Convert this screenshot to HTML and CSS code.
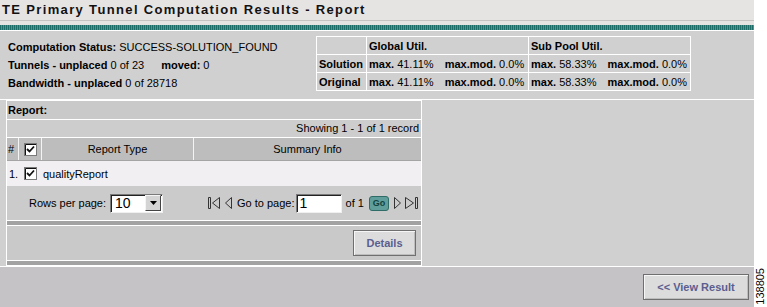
FILE: index.html
```html
<!DOCTYPE html>
<html lang="en">
<head>
    <meta charset="UTF-8">
    <meta name="viewport" content="width=device-width, initial-scale=1.0">
    <title>TE Primary Tunnel Computation Results - Report</title>
    <link rel="stylesheet" href="styles.css">
</head>
<body>
    <div class="page">
        <div class="header">
            <div class="title">TE Primary Tunnel Computation Results - Report</div>
            <div class="stripe"></div>
        </div>

        <div class="summary">
            <div class="status">
                <div><b>Computation Status:</b> SUCCESS-SOLUTION_FOUND</div>
                <div><b>Tunnels - unplaced</b> 0 of 23 <b class="moved">moved:</b> 0</div>
                <div><b>Bandwidth - unplaced</b> 0 of 28718</div>
            </div>
            <table class="util">
                <tr>
                    <th class="label"></th>
                    <th>Global Util.</th>
                    <th>Sub Pool Util.</th>
                </tr>
                <tr>
                    <th class="label">Solution</th>
                    <td><b>max.</b> 41.11% <span class="gap"><b>max.mod.</b> 0.0%</span></td>
                    <td><b>max.</b> 58.33% <span class="gap"><b>max.mod.</b> 0.0%</span></td>
                </tr>
                <tr>
                    <th class="label">Original</th>
                    <td><b>max.</b> 41.11% <span class="gap"><b>max.mod.</b> 0.0%</span></td>
                    <td><b>max.</b> 58.33% <span class="gap"><b>max.mod.</b> 0.0%</span></td>
                </tr>
            </table>
        </div>

        <div class="main">
            <div class="report">
                <div class="report-head">Report:</div>
                <div class="showing">Showing 1 - 1 of 1 record</div>

                <div class="grid-row col-head">
                    <div class="c-num">#</div>
                    <div class="c-check">
                        <svg class="checkbox" width="13" height="13" viewBox="0 0 13 13">
                            <rect x="0.5" y="0.5" width="12" height="12" fill="#fff" stroke="#7a7a7a"/>
                            <path d="M1.5 12V1.5H12" fill="none" stroke="#111"/>
                            <path d="M3 6l2.5 2.5L10 3.5" fill="none" stroke="#111" stroke-width="1.8"/>
                        </svg>
                    </div>
                    <div class="c-type">Report Type</div>
                    <div class="c-info">Summary Info</div>
                </div>

                <div class="grid-row data-row">
                    <div class="c-num">1.</div>
                    <div class="c-check">
                        <svg class="checkbox" width="13" height="13" viewBox="0 0 13 13">
                            <rect x="0.5" y="0.5" width="12" height="12" fill="#fff" stroke="#7a7a7a"/>
                            <path d="M1.5 12V1.5H12" fill="none" stroke="#111"/>
                            <path d="M3 6l2.5 2.5L10 3.5" fill="none" stroke="#111" stroke-width="1.8"/>
                        </svg>
                    </div>
                    <div class="c-type">qualityReport</div>
                    <div class="c-info"></div>
                </div>

                <div class="pager">
                    <span class="rows-label">Rows per page:</span>
                    <div class="select">
                        <span class="select-value">10</span>
                        <span class="select-arrow">
                            <svg width="7" height="4" viewBox="0 0 7 4"><path d="M0 0h7L3.5 4z" fill="#000"/></svg>
                        </span>
                    </div>
                    <div class="nav">
                        <svg class="nav-icon" width="14" height="14" viewBox="0 0 14 14">
                            <path d="M1.5 1.5h2v11h-2z" fill="none" stroke="#333"/>
                            <path d="M12.5 1.5v11L5.5 7z" fill="none" stroke="#333"/>
                        </svg>
                        <svg class="nav-icon prev" width="9" height="14" viewBox="0 0 9 14">
                            <path d="M7.5 1.5v11L1.5 7z" fill="none" stroke="#333"/>
                        </svg>
                        <span class="goto">Go to page:</span>
                        <span class="page-input">1</span>
                        <span class="of">of 1</span>
                        <span class="go">Go</span>
                        <svg class="nav-icon next" width="9" height="14" viewBox="0 0 9 14">
                            <path d="M1.5 1.5v11L7.5 7z" fill="none" stroke="#333"/>
                        </svg>
                        <svg class="nav-icon last" width="16" height="14" viewBox="0 0 16 14">
                            <path d="M1.5 1.5v11L9.5 7z" fill="none" stroke="#333"/>
                            <path d="M11.5 1.5h2v11h-2z" fill="none" stroke="#333"/>
                        </svg>
                    </div>
                </div>

                <div class="sep"></div>
                <div class="actions">
                    <button class="btn">Details</button>
                </div>
                <div class="sep"></div>
            </div>
        </div>

        <div class="footer">
            <button class="btn btn-view">&lt;&lt; View Result</button>
        </div>
    </div>
    <div class="fig-id">138805</div>
</body>
</html>
```

FILE: styles.css
```css
body {
    margin: 0;
    font-family: "Liberation Sans", Arial, sans-serif;
    font-size: 11px;
    color: #000;
    background: #fff;
    display: flex;
    height: 307px;
}

.page {
    width: 754px;
    background: #d0d0d0;
}

.header {
    background: #e6e3e3;
}

.title {
    height: 20px;
    line-height: 20px;
    padding-left: 2px;
    font-size: 13px;
    font-weight: bold;
    letter-spacing: 1.35px;
    color: #111;
    border-bottom: 1px solid #c4c2c2;
}

.stripe {
    margin-top: 4px;
    height: 5px;
    background: repeating-linear-gradient(90deg, #1f6d68 0, #1f6d68 1px, #4a9690 1px, #4a9690 2px);
    border-bottom: 1px solid #fff;
}

.summary {
    display: flex;
    align-items: flex-start;
    height: 63px;
    padding: 5px 0 0 8px;
    border-bottom: 1px solid #fff;
}

.status {
    width: 308px;
    padding-top: 2px;
    line-height: 18px;
}

.moved {
    margin-left: 14px;
}

.util {
    border-collapse: collapse;
    border: 1px solid #fff;
}

.util th,
.util td {
    border: 1px solid #fff;
    height: 17px;
    padding: 0 3px 0 2px;
    text-align: left;
    white-space: nowrap;
}

.util th.label {
    width: 44px;
}

.util td,
.util th {
    width: 156px;
}

.gap {
    margin-left: 8px;
}

.main {
    height: 166px;
    border-bottom: 1px solid #fff;
}

.report {
    margin-left: 6px;
    width: 414px;
    border: 1px solid #fff;
    border-bottom: none;
}

.report-head {
    height: 18px;
    line-height: 18px;
    padding-left: 1px;
    font-weight: bold;
    background: #c9c9c9;
    border-bottom: 1px solid #fff;
}

.showing {
    height: 17px;
    line-height: 17px;
    padding-right: 2px;
    text-align: right;
    background: #cdcdcd;
    border-bottom: 1px solid #fff;
}

.grid-row {
    display: grid;
    grid-template-columns: 12px 23px 152px 1fr;
}

.col-head {
    height: 22px;
    background: #bdbdbd;
    border-bottom: 1px solid #a4a4a4;
}

.col-head > div {
    display: flex;
    align-items: center;
    justify-content: center;
    border-right: 1px solid #f4f4f4;
}

.col-head > div:last-child {
    border-right: none;
}

.col-head .c-num {
    justify-content: flex-start;
    padding-left: 1px;
}

.data-row {
    height: 25px;
    background: #f1eff1;
}

.data-row > div {
    display: flex;
    align-items: center;
}

.data-row .c-num {
    padding-left: 2px;
}

.data-row .c-check {
    justify-content: center;
}

.data-row .c-type {
    padding-left: 1px;
}

.checkbox {
    display: block;
}

.pager {
    display: flex;
    align-items: center;
    height: 34px;
    background: #cbcbcb;
    white-space: nowrap;
}

.pager > * {
    flex-shrink: 0;
}

.rows-label {
    margin-left: 22px;
}

.select {
    display: flex;
    align-items: center;
    margin-left: 4px;
    width: 51px;
    height: 17px;
    background: #fff;
    border: 1px solid;
    border-color: #7a7a7a #f0f0f0 #f0f0f0 #7a7a7a;
    box-shadow: inset 1px 1px 0 #222;
}

.select-value {
    flex: 1;
    padding-left: 4px;
    font-size: 14px;
}

.select-arrow {
    display: flex;
    align-items: center;
    justify-content: center;
    width: 14px;
    height: 14px;
    margin-right: 1px;
    background: #d4d4d4;
    border: 1px solid;
    border-color: #f4f4f4 #444 #444 #f4f4f4;
}

.nav {
    display: flex;
    align-items: center;
    margin-left: 44px;
}

.nav > * {
    flex-shrink: 0;
}

.nav-icon {
    display: block;
}

.prev {
    margin-left: 3px;
}

.goto {
    margin-left: 4px;
}

.page-input {
    width: 41px;
    height: 17px;
    line-height: 17px;
    margin-left: 1px;
    padding-left: 3px;
    font-size: 14px;
    background: #fff;
    border: 1px solid;
    border-color: #7a7a7a #f0f0f0 #f0f0f0 #7a7a7a;
    box-shadow: inset 1px 1px 0 #222;
}

.of {
    margin-left: 4px;
}

.go {
    margin: 0 4px 0 5px;
    width: 18px;
    height: 13px;
    line-height: 13px;
    text-align: center;
    font-size: 9px;
    font-weight: bold;
    color: #12423f;
    background: #5f9e9a;
    border: 1px solid #2f6c68;
    border-radius: 3px;
}

.last {
    margin-left: 2px;
}

.sep {
    height: 4px;
    background: #a2a2a2;
    border-top: 1px solid #fff;
    border-bottom: 1px solid #fff;
}

.actions {
    display: flex;
    justify-content: flex-end;
    align-items: center;
    height: 34px;
    padding-right: 5px;
    background: #c9c9c9;
}

.btn {
    font-family: "Liberation Sans", Arial, sans-serif;
    font-size: 11px;
    font-weight: bold;
    color: #5b5e8f;
    background: #dcdcdc;
    border: 1px solid #6f6f6f;
    box-shadow: inset 1px 1px 0 #f6f6f6, inset -1px -1px 0 #bdbdbd;
    height: 26px;
    width: 63px;
    padding: 0;
}

.footer {
    display: flex;
    justify-content: flex-end;
    align-items: flex-start;
    height: 40px;
    padding-top: 7px;
    box-sizing: border-box;
    background: #c5c3c5;
}

.btn-view {
    width: 106px;
    margin-right: 5px;
}

.fig-id {
    align-self: flex-end;
    width: 13px;
    margin-bottom: 2px;
    font-size: 11px;
    writing-mode: vertical-rl;
    transform: rotate(180deg);
    text-align: right;
}
```
